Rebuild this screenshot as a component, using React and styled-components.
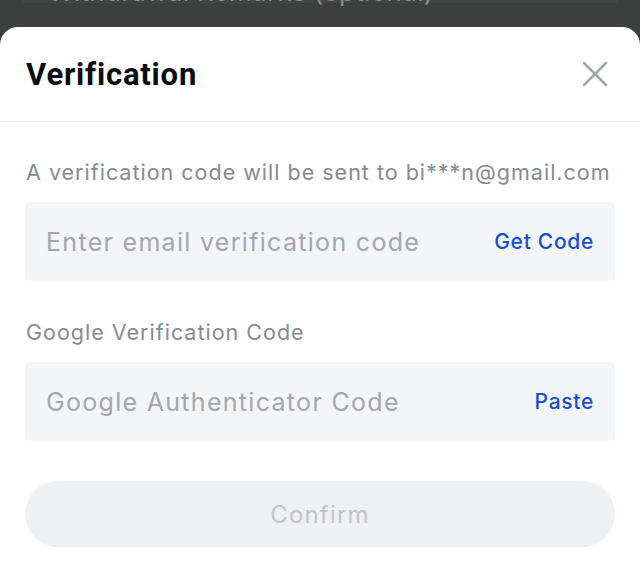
import React from 'react'
import styled, { createGlobalStyle } from 'styled-components'

const GlobalStyle = createGlobalStyle`
  html, body {
    margin: 0;
    padding: 0;
    background: #3d3e3e;
    font-family: Inter, "Noto Sans", sans-serif;
  }
`

const App = () => {
  return (
    <Screen>
      <GlobalStyle />
      <Backdrop>
        <BackdropPanel>
          <BackdropText>Withdrawal Remarks (optional)</BackdropText>
        </BackdropPanel>
      </Backdrop>
      <Sheet>
        <Header>
          <Title>Verification</Title>
          <CloseButton aria-label="close">
            <svg width="26" height="26" viewBox="0 0 26 26" fill="none">
              <path d="M2 2 L24 24 M24 2 L2 24" stroke="#a1a5ac" strokeWidth="2.5" strokeLinecap="round" />
            </svg>
          </CloseButton>
        </Header>
        <Body>
          <Hint>A verification code will be sent to bi***n@gmail.com</Hint>
          <Field>
            <FieldInput placeholder="Enter email verification code" />
            <FieldAction>Get Code</FieldAction>
          </Field>

          <Label>Google Verification Code</Label>
          <Field>
            <FieldInput placeholder="Google Authenticator Code" />
            <FieldAction>Paste</FieldAction>
          </Field>

          <ConfirmButton disabled>Confirm</ConfirmButton>
        </Body>
      </Sheet>
    </Screen>
  )
}

export default App

const Screen = styled.div`
  width: 640px;
  height: 588px;
  display: flex;
  flex-direction: column;
  overflow: hidden;
`

const Backdrop = styled.div`
  height: 27px;
  flex-shrink: 0;
  overflow: hidden;
  background: #3d3e3e;
`

const BackdropPanel = styled.div`
  margin: 0 22px;
  height: 100%;
  background: #424343;
  padding-left: 26px;
`

const BackdropText = styled.div`
  margin-top: -24px;
  font-size: 26px;
  line-height: 32px;
  color: #8b8c8c;
  letter-spacing: 0.3px;
`

const Sheet = styled.div`
  flex: 1;
  background: #fff;
  border-radius: 18px 18px 0 0;
`

const Header = styled.div`
  height: 94px;
  display: flex;
  align-items: center;
  justify-content: space-between;
  padding: 0 32px 0 26px;
  border-bottom: 1px solid #eeeff2;
`

const Title = styled.h1`
  margin: 0;
  font-family: Roboto, "Liberation Sans", sans-serif;
  font-weight: 700;
  font-size: 31px;
  letter-spacing: 0.8px;
  color: #0b0c0f;
`

const CloseButton = styled.button`
  border: 0;
  background: none;
  padding: 0;
  display: flex;
  cursor: pointer;
`

const Body = styled.div`
  padding: 37px 25px 0;
  display: flex;
  flex-direction: column;
`

const Hint = styled.div`
  font-size: 21.5px;
  line-height: 26px;
  letter-spacing: 1px;
  color: #858a93;
  margin-left: 1px;
  margin-bottom: 17px;
`

const Label = styled(Hint)`
  margin-top: 38px;
  margin-bottom: 17px;
`

const Field = styled.div`
  height: 79px;
  display: flex;
  align-items: center;
  background: #f4f5f8;
  border-radius: 5px;
  padding: 0 21px;
  gap: 16px;
`

const FieldInput = styled.input`
  flex: 1;
  min-width: 0;
  border: 0;
  outline: none;
  background: transparent;
  font-family: Inter, "Noto Sans", sans-serif;
  font-size: 25px;
  letter-spacing: 1.3px;
  color: #1b1d22;
  padding: 0;

  &::placeholder {
    color: #a1a6af;
  }
`

const FieldAction = styled.span`
  font-size: 21px;
  font-weight: 500;
  letter-spacing: 0.7px;
  color: #1450cc;
  cursor: pointer;
  white-space: nowrap;
`

const ConfirmButton = styled.button`
  margin-top: 40px;
  height: 66px;
  border: 0;
  border-radius: 33px;
  background: #eff0f3;
  font-family: Inter, "Noto Sans", sans-serif;
  font-size: 24px;
  letter-spacing: 1.2px;
  color: #c1c4ca;
`
